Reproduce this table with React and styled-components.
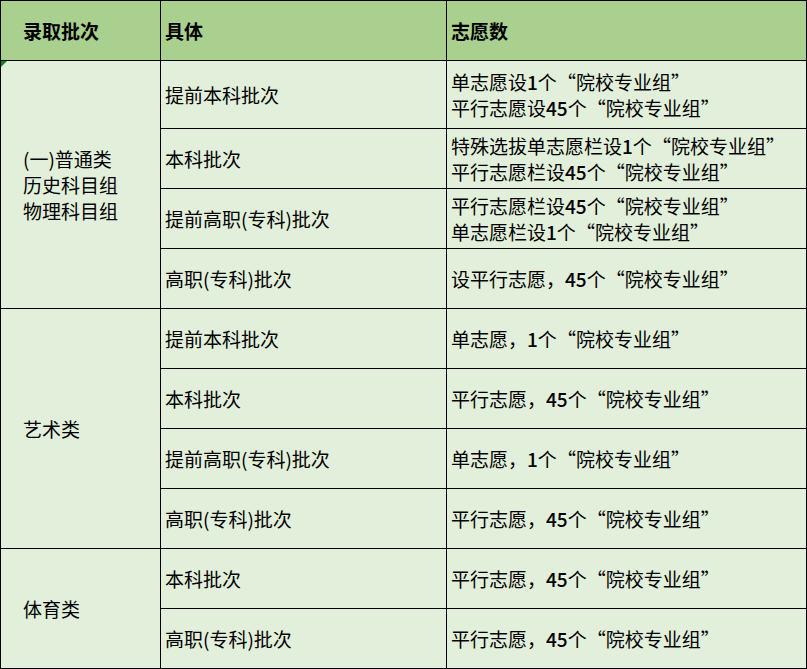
import React from "react";
import styled, { createGlobalStyle } from "styled-components";

const Global = createGlobalStyle`
  html, body { margin: 0; padding: 0; background: #fff; }
  body { font-family: "Noto Sans CJK SC", "Noto Sans", sans-serif; color: #000; }
`;

const Table = styled.table`
  border-collapse: collapse;
  table-layout: fixed;
  width: 806px;
  font-size: 19px;
  line-height: 26px;
  & td, & th {
    border: 1px solid #000;
    vertical-align: middle;
    text-align: left;
    padding: 0 4px;
    overflow: hidden;
    white-space: nowrap;
  }
`;

const HeadCell = styled.th`
  height: 59px;
  background: #a9d08e;
  font-weight: 700;
  padding-left: ${({ $indent }) => ($indent ? "22px" : "4px")} !important;
`;

const GroupCell = styled.td`
  background: #e2efda;
  padding-left: 22px !important;
  position: relative;
  ${({ $flag }) =>
    $flag &&
    `&::before {
      content: "";
      position: absolute;
      left: 0;
      top: 0;
      border-top: 6px solid #1b7f2d;
      border-right: 6px solid transparent;
    }`}
`;

const Cell = styled.td`
  background: #e2efda;
  height: ${({ $tall }) => ($tall ? "67px" : "59px")};
`;

const Line = styled.div``;

const Quote = styled.span`
  font-feature-settings: "fwid";
`;

const Num = styled.span`
  font-weight: 500;
`;

// wrap curly quotes (full width) and digits (heavier) so they read like the sheet
const rich = (text) =>
  text.split(/([“”]|\d+)/).map((part, i) => {
    if (part === "“" || part === "”") return <Quote key={i}>{part}</Quote>;
    if (/^\d+$/.test(part)) return <Num key={i}>{part}</Num>;
    return part;
  });

const groups = [
  {
    name: ["(一)普通类", "历史科目组", "物理科目组"],
    flag: true,
    rows: [
      ["提前本科批次", ["单志愿设1个“院校专业组”", "平行志愿设45个“院校专业组”"], true],
      ["本科批次", ["特殊选拔单志愿栏设1个“院校专业组”", "平行志愿栏设45个“院校专业组”"]],
      ["提前高职(专科)批次", ["平行志愿栏设45个“院校专业组”", "单志愿栏设1个“院校专业组”"]],
      ["高职(专科)批次", ["设平行志愿，45个“院校专业组”"]],
    ],
  },
  {
    name: ["艺术类"],
    rows: [
      ["提前本科批次", ["单志愿，1个“院校专业组”"]],
      ["本科批次", ["平行志愿，45个“院校专业组”"]],
      ["提前高职(专科)批次", ["单志愿，1个“院校专业组”"]],
      ["高职(专科)批次", ["平行志愿，45个“院校专业组”"]],
    ],
  },
  {
    name: ["体育类"],
    rows: [
      ["本科批次", ["平行志愿，45个“院校专业组”"]],
      ["高职(专科)批次", ["平行志愿，45个“院校专业组”"]],
    ],
  },
];

const App = () => (
  <>
    <Global />
    <Table>
      <colgroup>
        <col style={{ width: 160 }} />
        <col style={{ width: 286 }} />
        <col style={{ width: 360 }} />
      </colgroup>
      <thead>
        <tr>
          <HeadCell $indent>录取批次</HeadCell>
          <HeadCell>具体</HeadCell>
          <HeadCell>志愿数</HeadCell>
        </tr>
      </thead>
      <tbody>
        {groups.map((g, gi) =>
          g.rows.map(([batch, lines, tall], ri) => (
            <tr key={`${gi}-${ri}`}>
              {ri === 0 && (
                <GroupCell rowSpan={g.rows.length} $flag={g.flag}>
                  {g.name.map((n) => (
                    <Line key={n}>{n}</Line>
                  ))}
                </GroupCell>
              )}
              <Cell $tall={tall}>{batch}</Cell>
              <Cell $tall={tall}>
                {lines.map((l) => (
                  <Line key={l}>{rich(l)}</Line>
                ))}
              </Cell>
            </tr>
          ))
        )}
      </tbody>
    </Table>
  </>
);

export default App;
